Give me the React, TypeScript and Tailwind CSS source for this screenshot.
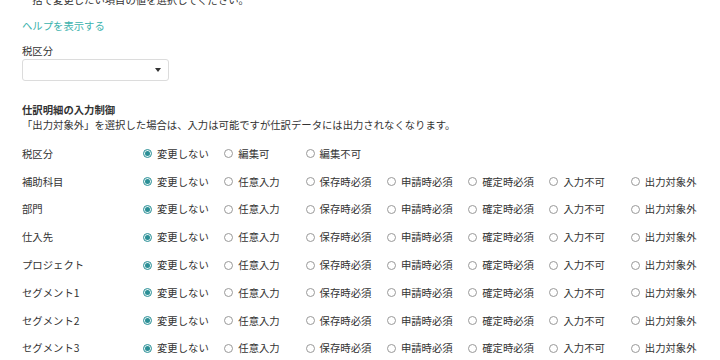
import React from 'react';

const fullOpts = ['変更しない', '任意入力', '保存時必須', '申請時必須', '確定時必須', '入力不可', '出力対象外'];

const rows = [
  { label: '税区分', opts: ['変更しない', '編集可', '編集不可'] },
  { label: '補助科目', opts: fullOpts },
  { label: '部門', opts: fullOpts },
  { label: '仕入先', opts: fullOpts },
  { label: 'プロジェクト', opts: fullOpts },
  { label: 'セグメント1', opts: fullOpts },
  { label: 'セグメント2', opts: fullOpts },
  { label: 'セグメント3', opts: fullOpts },
];

const Radio = ({ checked }: { checked: boolean }) => (
  <span
    className={`flex h-[9px] w-[9px] shrink-0 items-center justify-center rounded-full border ${
      checked ? 'border-[#2b8f96] bg-[#e6f4f4]' : 'border-[#999] bg-white'
    }`}
  >
    {checked && <span className="h-[5px] w-[5px] rounded-full bg-[#2b8f96]" />}
  </span>
);

const App = () => {
  return (
    <div
      className="h-[360px] w-[720px] overflow-hidden bg-white pl-[22px] text-[10.35px] leading-[14px] text-[#333]"
      style={{ fontFamily: '"Noto Sans CJK JP", "Noto Sans", sans-serif' }}
    >
      <p className="-mt-[7px]">一括で変更したい項目の値を選択してください。</p>

      <a className="mt-[12px] block text-[#3bb2ad]">ヘルプを表示する</a>

      <div className="mt-[11px]">
        <label className="block">税区分</label>
        <div className="mt-[1px] flex h-[22px] w-[147px] items-center justify-end rounded-[3px] border border-[#dcdcdc] bg-white pr-[7px]">
          <span className="h-0 w-0 border-x-[3px] border-t-[4px] border-x-transparent border-t-[#333]" />
        </div>
      </div>

      <div className="mt-[22px]">
        <h3 className="font-bold">仕訳明細の入力制御</h3>
        <p className="mt-[1px]">「出力対象外」を選択した場合は、入力は可能ですが仕訳データには出力されなくなります。</p>
      </div>

      <div className="mt-[8px] flex flex-col">
        {rows.map((row) => (
          <div key={row.label} className="flex h-[27.8px] items-center">
            <div className="w-[121px] shrink-0">{row.label}</div>
            <div className="flex">
              {row.opts.map((o, i) => (
                <label key={o} className="flex w-[81.3px] shrink-0 items-center gap-[5px]">
                  <Radio checked={i === 0} />
                  <span className="whitespace-nowrap">{o}</span>
                </label>
              ))}
            </div>
          </div>
        ))}
      </div>
    </div>
  );
};

export default App;
